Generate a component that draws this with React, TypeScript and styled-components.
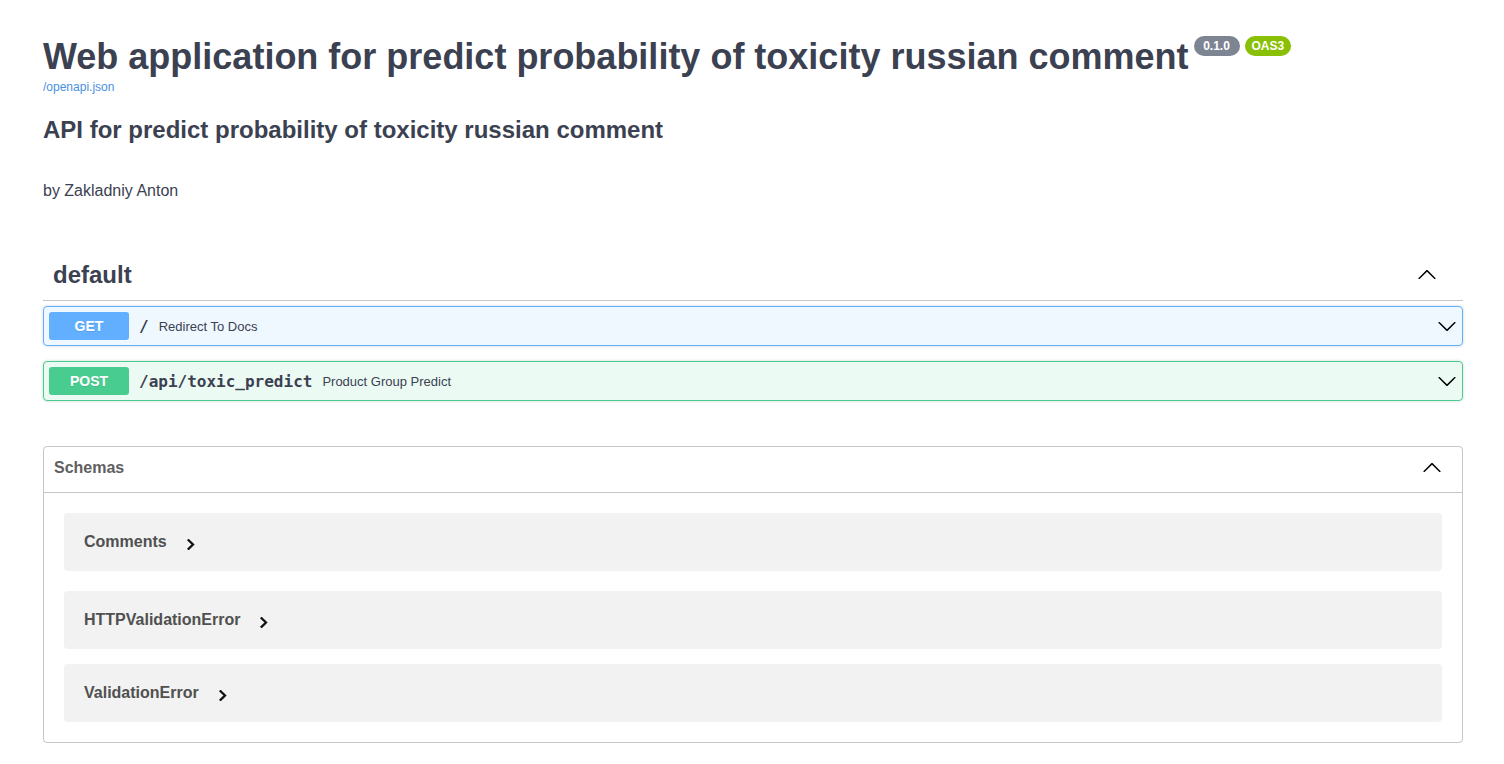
import React from "react";
import styled, { createGlobalStyle, css } from "styled-components";

const GlobalStyle = createGlobalStyle`
  html, body { margin: 0; padding: 0; background: #ffffff; }
  body { font-family: "Liberation Sans", Arial, sans-serif; color: #3b4151; }
  * { box-sizing: border-box; }
`;

const Wrapper = styled.div`
  max-width: 1460px;
  margin: 0 auto;
  padding: 0 19px 40px 21px;
`;

const Info = styled.section`
  padding-top: 36px;
`;

const TitleRow = styled.div`
  display: flex;
  align-items: flex-start;
`;

const Title = styled.h2`
  margin: 0;
  font-size: 36px;
  line-height: 41px;
  font-weight: 700;
  color: #3b4151;
`;

const Badge = styled.span<{ $variant?: "version" | "oas" }>`
  display: inline-block;
  margin: 0 0 0 5px;
  min-width: 46px;
  padding: 3px 7px;
  border-radius: 57px;
  background: ${(p) => (p.$variant === "oas" ? "#89bf04" : "#7d8492")};
  color: #ffffff;
  font-size: 12px;
  line-height: 14px;
  font-weight: 700;
  text-align: center;
`;

const SpecLink = styled.a`
  display: block;
  margin-top: 3px;
  font-size: 12px;
  line-height: 14px;
  color: #4990e2;
  text-decoration: none;
`;

const Description = styled.h2`
  margin: 22px 0 0;
  font-size: 24px;
  line-height: 28px;
  font-weight: 700;
  color: #3b4151;
`;

const Author = styled.p`
  margin: 38px 0 0;
  font-size: 16px;
  line-height: 18px;
  color: #3b4151;
`;

const TagSection = styled.section`
  margin-top: 52px;
`;

const TagHeader = styled.h3`
  display: flex;
  align-items: center;
  margin: 0 0 5px;
  padding: 9px 20px 11px 10px;
  border-bottom: 1px solid rgba(59, 65, 81, 0.3);
`;

const TagName = styled.span`
  flex: 1;
  font-size: 24px;
  line-height: 28px;
  font-weight: 700;
  color: #3b4151;
`;

const IconButton = styled.button<{ $padRight?: number; $shiftY?: number }>`
  display: flex;
  align-items: center;
  justify-content: center;
  border: none;
  background: none;
  padding: 0 ${(p) => p.$padRight ?? 0}px 0 0;
  margin: ${(p) => p.$shiftY ?? 0}px 0 0;
  color: #000000;
  cursor: pointer;
`;

const OperationList = styled.div`
  display: flex;
  flex-direction: column;
  gap: 15px;
`;

const methodColors = {
  get: "97, 175, 254",
  post: "73, 204, 144",
};

type Method = keyof typeof methodColors;

const Operation = styled.div<{ $method: Method }>`
  display: flex;
  align-items: center;
  padding: 5px;
  border-radius: 4px;
  ${(p) => css`
    border: 1px solid rgb(${methodColors[p.$method]});
    background: rgba(${methodColors[p.$method]}, 0.1);
  `}
  box-shadow: 0 0 3px rgba(0, 0, 0, 0.19);
`;

const MethodBadge = styled.span<{ $method: Method }>`
  min-width: 80px;
  padding: 6px 0;
  border-radius: 3px;
  background: rgb(${(p) => methodColors[p.$method]});
  color: #ffffff;
  font-size: 14px;
  line-height: 16px;
  font-weight: 700;
  text-align: center;
  text-shadow: 0 1px 0 rgba(0, 0, 0, 0.1);
`;

const Path = styled.span`
  padding: 0 10px;
  font-family: "DejaVu Sans Mono", "Liberation Mono", monospace;
  font-size: 16px;
  font-weight: 700;
  color: #3b4151;
`;

const Summary = styled.span`
  flex: 1;
  font-size: 13px;
  color: #3b4151;
`;

const Models = styled.section`
  margin-top: 45px;
  border: 1px solid rgba(59, 65, 81, 0.3);
  border-radius: 4px;
`;

const ModelsHeader = styled.h4`
  display: flex;
  align-items: flex-start;
  margin: 0;
  padding: 10px 20px 10px 10px;
  border-bottom: 1px solid rgba(59, 65, 81, 0.3);
`;

const ModelsTitle = styled.span`
  flex: 1;
  padding-top: 2px;
  font-size: 16px;
  line-height: 18px;
  font-weight: 700;
  color: #606060;
`;

const ModelsToggle = styled.button`
  display: flex;
  align-items: flex-start;
  height: 25px;
  padding: 1px 0 0;
  border: none;
  background: none;
  cursor: pointer;
`;

const ModelList = styled.div`
  padding-bottom: 5px;
`;

const ModelContainer = styled.div`
  display: flex;
  align-items: center;
  height: 58px;
  margin: 0 20px 15px;
  padding: 0 20px;
  border-radius: 4px;
  background: rgba(0, 0, 0, 0.05);

  &:first-of-type {
    margin: 20px;
  }
`;

const ModelTitle = styled.span`
  font-size: 16px;
  line-height: 18px;
  font-weight: 700;
  color: #505050;
`;

const ModelToggle = styled.span`
  display: inline-flex;
  margin: 4px 0 0 20px;
`;

const ChevronDown = () => (
  <svg width="20" height="20" viewBox="0 0 20 20" aria-hidden="true">
    <path
      fill="#000"
      d="M17.418 6.109c.272-.268.709-.268.979 0s.271.701 0 .969l-7.908 7.83c-.27.268-.707.268-.979 0l-7.908-7.83c-.27-.268-.27-.701 0-.969.271-.268.709-.268.979 0L10 13.25l7.418-7.141z"
    />
  </svg>
);

const ChevronUp = () => (
  <svg width="20" height="20" viewBox="0 0 20 20" aria-hidden="true">
    <path
      fill="#000"
      d="M2.582 13.891c-.272.268-.709.268-.979 0s-.271-.701 0-.969l7.908-7.830c.27-.268.707-.268.979 0l7.908 7.830c.27.268.27.701 0 .969-.271.268-.709.268-.979 0L10 6.750l-7.418 7.141z"
    />
  </svg>
);

const ChevronRight = () => (
  <svg width="8" height="11" viewBox="0 0 8 11" aria-hidden="true">
    <polyline
      points="1.6,1.2 6,5.5 1.6,9.8"
      fill="none"
      stroke="#111"
      strokeWidth="2.3"
      strokeLinecap="square"
    />
  </svg>
);

const operations: { method: Method; path: string; summary: string }[] = [
  { method: "get", path: "/", summary: "Redirect To Docs" },
  { method: "post", path: "/api/toxic_predict", summary: "Product Group Predict" },
];

const schemas = ["Comments", "HTTPValidationError", "ValidationError"];

export default function App() {
  return (
    <>
      <GlobalStyle />
      <Wrapper>
        <Info>
          <TitleRow>
            <Title>Web application for predict probability of toxicity russian comment</Title>
            <Badge>0.1.0</Badge>
            <Badge $variant="oas">OAS3</Badge>
          </TitleRow>
          <SpecLink href="#">/openapi.json</SpecLink>
          <Description>API for predict probability of toxicity russian comment</Description>
          <Author>by Zakladniy Anton</Author>
        </Info>

        <TagSection>
          <TagHeader>
            <TagName>default</TagName>
            <IconButton $padRight={6} $shiftY={-1} aria-label="Collapse operation">
              <ChevronUp />
            </IconButton>
          </TagHeader>
          <OperationList>
            {operations.map((op) => (
              <Operation key={op.path} $method={op.method}>
                <MethodBadge $method={op.method}>{op.method.toUpperCase()}</MethodBadge>
                <Path>{op.path}</Path>
                <Summary>{op.summary}</Summary>
                <IconButton aria-label="Expand operation">
                  <ChevronDown />
                </IconButton>
              </Operation>
            ))}
          </OperationList>
        </TagSection>

        <Models>
          <ModelsHeader>
            <ModelsTitle>Schemas</ModelsTitle>
            <ModelsToggle aria-label="Collapse schemas">
              <ChevronUp />
            </ModelsToggle>
          </ModelsHeader>
          <ModelList>
            {schemas.map((name) => (
              <ModelContainer key={name}>
                <ModelTitle>{name}</ModelTitle>
                <ModelToggle>
                  <ChevronRight />
                </ModelToggle>
              </ModelContainer>
            ))}
          </ModelList>
        </Models>
      </Wrapper>
    </>
  );
}
